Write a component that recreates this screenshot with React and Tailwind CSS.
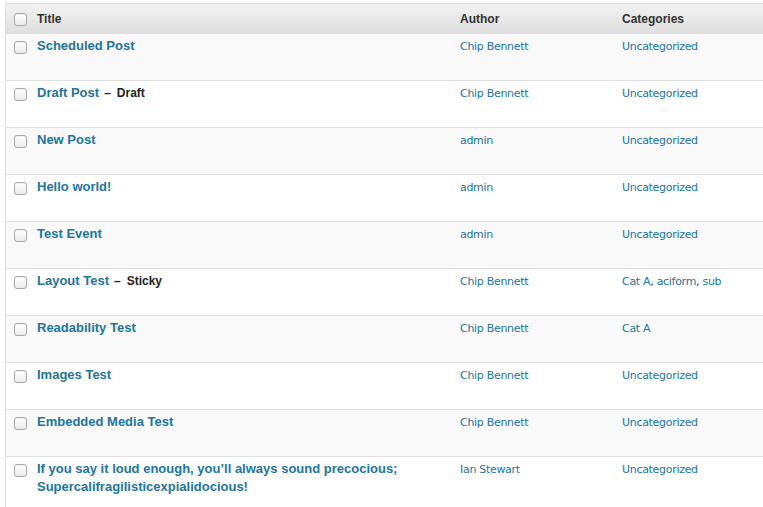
import React from "react";

const rows = [
  { title: "Scheduled Post", author: "Chip Bennett", cats: ["Uncategorized"] },
  { title: "Draft Post", state: "Draft", author: "Chip Bennett", cats: ["Uncategorized"] },
  { title: "New Post", author: "admin", cats: ["Uncategorized"] },
  { title: "Hello world!", author: "admin", cats: ["Uncategorized"] },
  { title: "Test Event", author: "admin", cats: ["Uncategorized"] },
  { title: "Layout Test", state: "Sticky", author: "Chip Bennett", cats: ["Cat A", "aciform", "sub"] },
  { title: "Readability Test", author: "Chip Bennett", cats: ["Cat A"] },
  { title: "Images Test", author: "Chip Bennett", cats: ["Uncategorized"] },
  { title: "Embedded Media Test", author: "Chip Bennett", cats: ["Uncategorized"] },
  {
    title: "If you say it loud enough, you\u2019ll always sound precocious; Supercalifragilisticexpialidocious!",
    author: "Ian Stewart",
    cats: ["Uncategorized"],
  },
];

const bold = { fontFamily: '"Liberation Sans", Arial, sans-serif' };

function Check() {
  return (
    <span className="block w-[13px] h-[13px] rounded-[3px] border border-[#a8a8a8] bg-gradient-to-b from-white to-[#ececec] shadow-[inset_0_1px_1px_rgba(0,0,0,0.05)]" />
  );
}

export default function App() {
  return (
    <div
      className="w-[763px] h-[507px] overflow-hidden bg-white pt-[3px] pl-[5px]"
      style={{ fontFamily: '"DejaVu Sans", "Liberation Sans", sans-serif' }}
    >
      <div className="border-l border-t border-[#dfdfdf]">
        <div
          className="grid grid-cols-[31px_423px_162px_1fr] h-[30px] items-center bg-gradient-to-b from-[#f2f2f2] to-[#dedede] text-[12px] font-bold text-[#333]"
          style={bold}
        >
          <div className="pl-[8px]"><Check /></div>
          <div>Title</div>
          <div>Author</div>
          <div>Categories</div>
        </div>
        {rows.map((r, i) => (
          <div
            key={i}
            className={`grid grid-cols-[31px_423px_162px_1fr] ${i === rows.length - 1 ? "h-[60px]" : "h-[47px] border-b border-[#dfdfdf]"} ${i % 2 === 0 ? "bg-[#f9f9f9]" : "bg-white"}`}
          >
            <div className="pl-[8px] pt-[7px]"><Check /></div>
            <div
              className="pt-[3px] pr-[20px] text-[13px] leading-[18px] font-bold text-[#21759b]"
              style={bold}
            >
              {r.title}
              {r.state && (
                <span className="text-[12px] text-[#222]">
                  <span className="ml-[5px]">&ndash;</span>
                  <span className="ml-[6px]">{r.state}</span>
                </span>
              )}
            </div>
            <div className="pt-[4px] text-[11px] leading-[18px] tracking-[-0.3px] text-[#21759b]">{r.author}</div>
            <div className="pt-[4px] text-[11px] leading-[18px] tracking-[-0.3px] text-[#21759b]">
              {r.cats.map((c, j) => (
                <span key={j}>
                  {c}
                  {j < r.cats.length - 1 && <span className="text-[#333]">, </span>}
                </span>
              ))}
            </div>
          </div>
        ))}
      </div>
    </div>
  );
}
